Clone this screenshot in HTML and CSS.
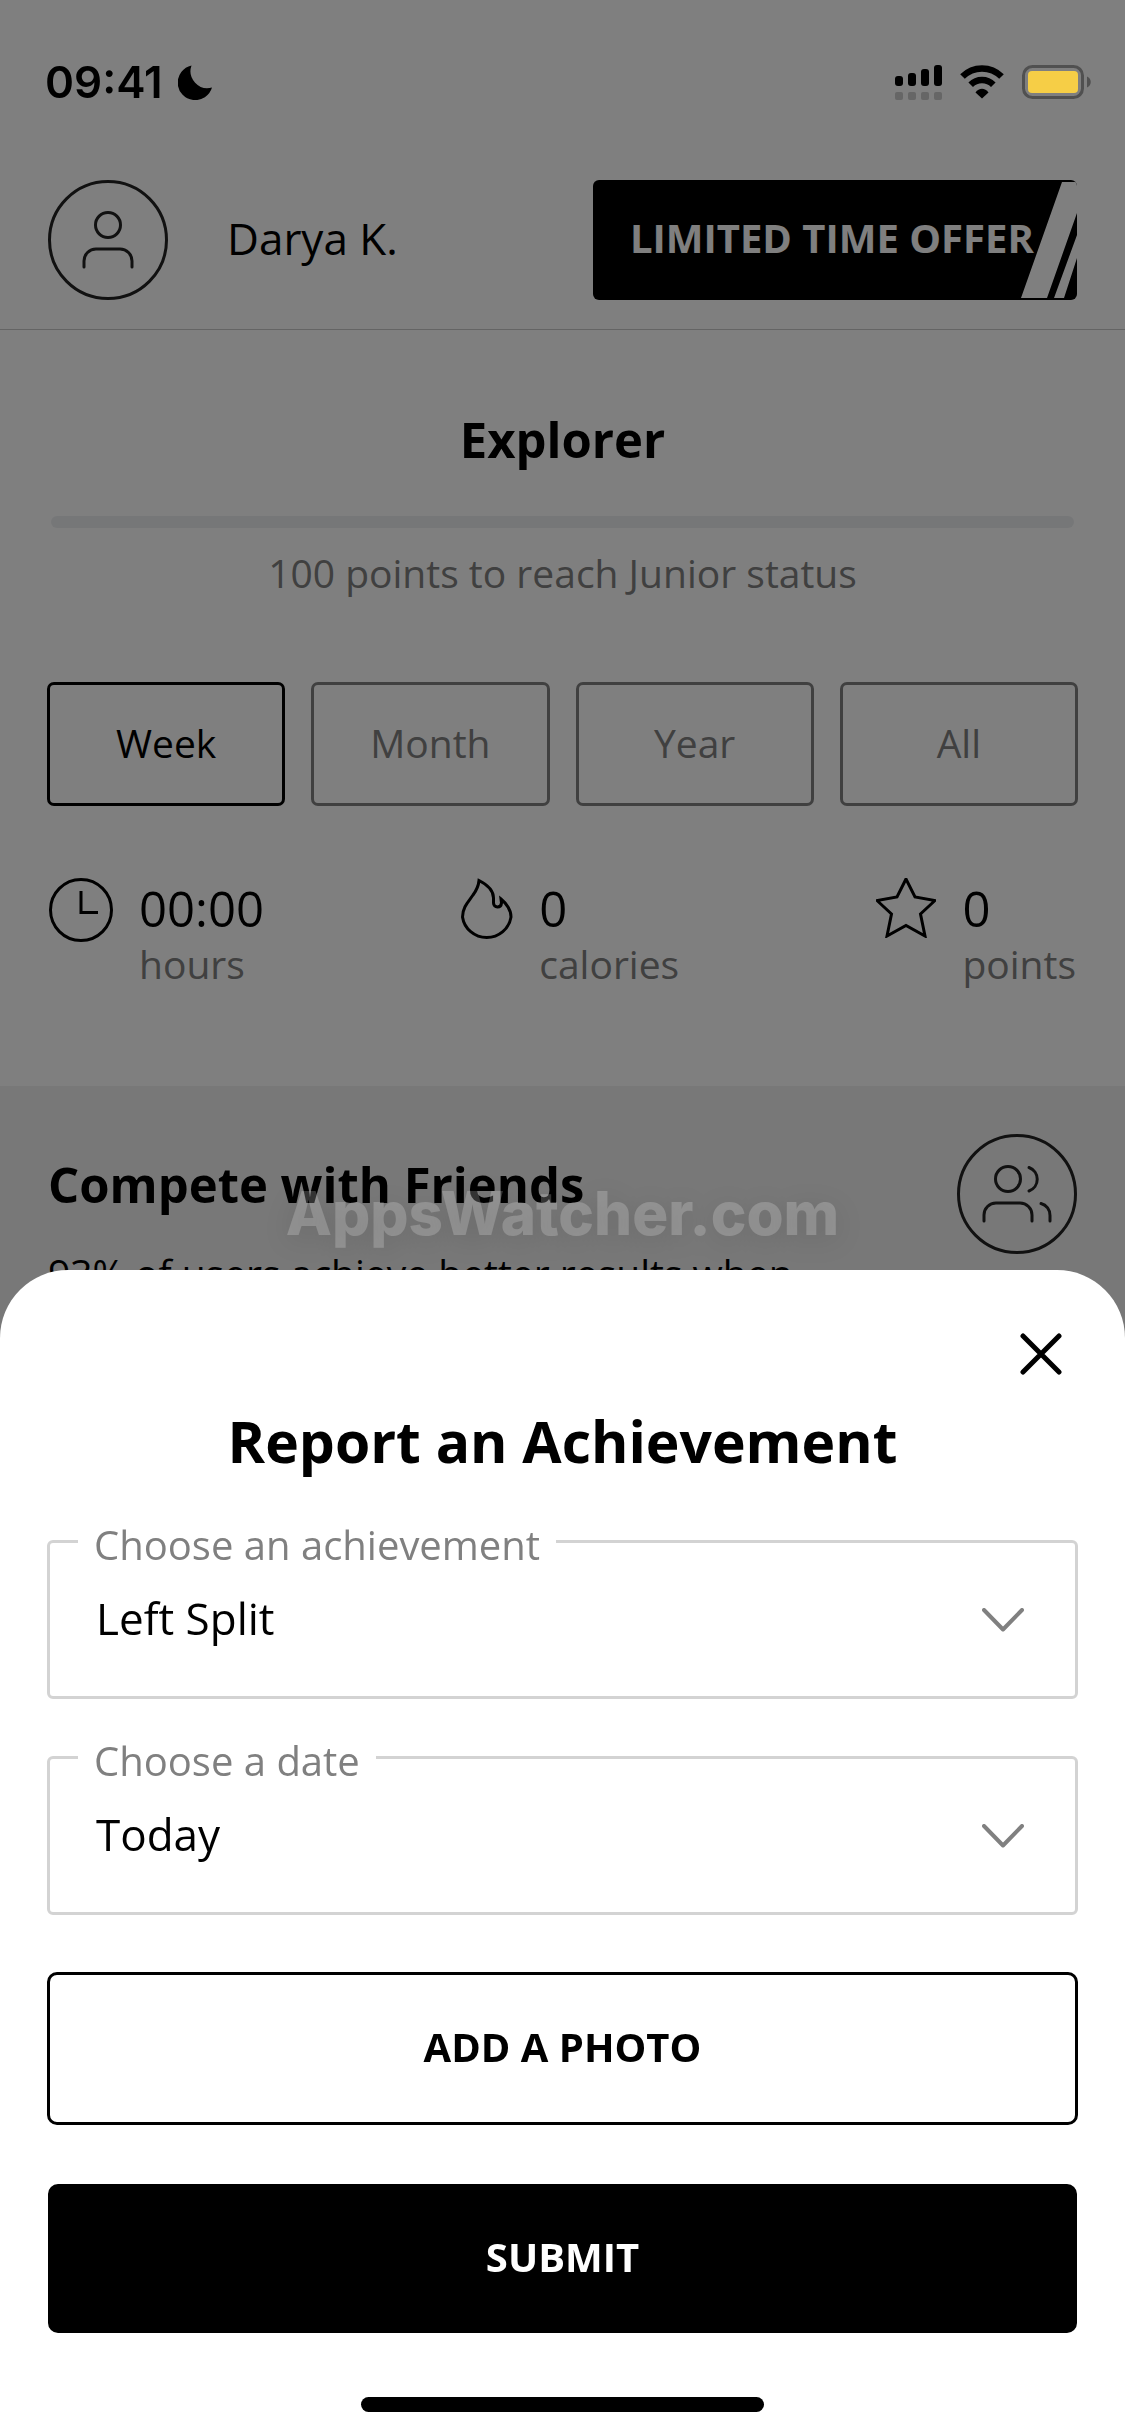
FILE: index.html
```html
<!DOCTYPE html>
<html lang="en">
<head>
  <meta charset="UTF-8">
  <meta name="viewport" content="width=device-width, initial-scale=1">
  <title>Report an Achievement</title>
  <link rel="stylesheet" href="styles.css">
</head>
<body>
  <div class="app">
    <div class="status-bar">
      <div class="status-left">
        <span class="time">09:41</span>
        <svg width="35" height="35" viewBox="0 0 35 35"><path d="M13.5 .5A17.5 17.5 0 1 0 34 22.5A17 17 0 0 1 13.5 .5z"/></svg>
      </div>
      <div class="status-right">
        <svg width="47" height="35" viewBox="0 0 47 35">
          <rect x="0" y="11" width="8" height="10" rx="3"/>
          <rect x="13" y="8" width="8" height="13" rx="3"/>
          <rect x="26" y="4" width="8" height="17" rx="3"/>
          <rect x="39" y="0" width="8" height="21" rx="3"/>
          <g fill="#666">
            <rect x="0" y="27" width="8" height="8" rx="2"/>
            <rect x="13" y="27" width="8" height="8" rx="2"/>
            <rect x="26" y="27" width="8" height="8" rx="2"/>
            <rect x="39" y="27" width="8" height="8" rx="2"/>
          </g>
        </svg>
        <svg width="46" height="34" viewBox="0 0 46 34">
          <path d="M3.5 11.5A27.5 27.5 0 0 1 42.5 11.5" fill="none" stroke="#000" stroke-width="6.5"/>
          <path d="M11.7 19.7A16 16 0 0 1 34.3 19.7" fill="none" stroke="#000" stroke-width="6.5"/>
          <path d="M23 33.5L16.5 27.5C20 22.5 26 22.5 29.5 27.5z"/>
        </svg>
        <svg width="70" height="34" viewBox="0 0 70 34">
          <rect x="1.5" y="1.5" width="59" height="31" rx="9" fill="none" stroke="#505050" stroke-width="3"/>
          <rect x="6" y="6" width="50" height="22" rx="4" fill="#f6ce46"/>
          <path d="M65 11.5c5 2 5 9 0 11z" fill="#505050"/>
        </svg>
      </div>
    </div>

    <header class="header">
      <svg class="avatar" viewBox="0 0 120 120">
        <circle cx="60" cy="60" r="58.5"/>
        <circle cx="60" cy="45" r="12.5"/>
        <path d="M36 87v-6a12 12 0 0 1 12-12h24a12 12 0 0 1 12 12v6"/>
      </svg>
      <span class="user-name">Darya K.</span>
      <button type="button" class="offer">LIMITED TIME OFFER
        <svg class="offer-stripes" width="60" height="116" viewBox="0 0 60 116">
          <path d="M45 0H60V31L30 116H4zM60 53V76L47 116H37z"/>
        </svg>
      </button>
    </header>

    <main class="progress">
      <h2 class="level">Explorer</h2>
      <div class="bar"></div>
      <p class="caption">100 points to reach Junior status</p>

      <div class="tabs">
        <button type="button" class="tab active">Week</button>
        <button type="button" class="tab">Month</button>
        <button type="button" class="tab">Year</button>
        <button type="button" class="tab">All</button>
      </div>

      <div class="stats">
        <div class="stat">
          <svg width="64" height="64" viewBox="0 0 64 64"><circle cx="32" cy="32" r="30.5"/><path d="M32 13v21.5h17"/></svg>
          <div><div class="stat-value">00:00</div><div class="stat-label">hours</div></div>
        </div>
        <div class="stat">
          <svg width="52" height="64" viewBox="0 0 52 64"><path d="M18 2.5C27 7 32.5 13 32.5 20v5c0 5 7.500 5.500 8 0l-.5-4C46 26 50 32 50 39a24.500 24 0 0 1-48.500 0C1.500 29 8 23 12 17c3-4 5.500-9 6-14.500z"/></svg>
          <div><div class="stat-value">0</div><div class="stat-label">calories</div></div>
        </div>
        <div class="stat">
          <svg width="60" height="60" viewBox="0 0 60 60"><path d="M30 1L21 19L1 22.500L15.500 36L11 58L30 47.500L49 58L44.500 36L59 22.500L39 19z"/></svg>
          <div><div class="stat-value">0</div><div class="stat-label">points</div></div>
        </div>
      </div>
    </main>

    <section class="compete">
      <div class="compete-text">
        <h2>Compete with Friends</h2>
        <p>93% of users achieve better results when</p>
      </div>
      <svg class="avatar" viewBox="0 0 120 120">
        <circle cx="60" cy="60" r="58.5"/>
        <circle cx="51" cy="45" r="12.5"/>
        <path d="M27 87v-6a12 12 0 0 1 12-12h24a12 12 0 0 1 12 12v6"/>
        <path d="M72 33.500a12.500 12.500 0 0 1 0 23.500M84 69.500a12 12 0 0 1 9 12v5.500"/>
      </svg>
    </section>
  </div>

  <div class="overlay"></div>

  <div class="modal">
    <div class="watermark">AppsWatcher.com</div>
    <form class="sheet">
      <button type="button" class="close" aria-label="Close">
        <svg width="42" height="42" viewBox="0 0 42 42"><path d="M3 3L39 39M39 3L3 39"/></svg>
      </button>
      <h1>Report an Achievement</h1>

      <div class="field">
        <label for="achievement">Choose an achievement</label>
        <select id="achievement" name="achievement">
          <option>Left Split</option>
        </select>
        <svg class="chevron" width="42" height="24" viewBox="0 0 42 24"><path d="M2 2L21 21.5L40 2"/></svg>
      </div>

      <div class="field">
        <label for="date">Choose a date</label>
        <select id="date" name="date">
          <option>Today</option>
        </select>
        <svg class="chevron" width="42" height="24" viewBox="0 0 42 24"><path d="M2 2L21 21.5L40 2"/></svg>
      </div>

      <button type="button" class="btn">ADD A PHOTO</button>
      <button type="submit" class="btn btn-dark">SUBMIT</button>
      <div class="home-indicator"></div>
    </form>
  </div>
</body>
</html>
```
FILE: styles.css
```css
* { box-sizing: border-box; }
body, h1, h2, p { margin: 0; }
body { font-family: "Open Sans", sans-serif; font-size: 39px; line-height: 56px; color: #000; background: #fff; }
button, select { font: inherit; color: inherit; cursor: pointer; }
svg { display: block; flex: none; }
h2 { font-size: 49px; line-height: 60px; }

.app { display: flex; flex-direction: column; height: 100vh; overflow: hidden; }

/* status bar stays bright above the dimmed page */
.status-bar { position: relative; z-index: 2; display: flex; justify-content: space-between; align-items: center; height: 164px; padding: 0 33px 0 45px; flex: none; }
.status-left { display: flex; align-items: center; gap: 15px; }
.status-right { display: flex; align-items: center; gap: 17px; }
.time { font-family: Inter, sans-serif; font-size: 44px; font-weight: 600; }

.header { display: flex; align-items: center; padding: 16px 48px 29px; border-bottom: 1px solid #c8c8c8; }
.avatar { width: 120px; height: 120px; fill: none; stroke: #222; stroke-width: 3; stroke-linecap: round; }
.user-name { margin-left: 59px; padding-bottom: 4px; font-size: 44px; }
.offer { position: relative; margin-left: auto; width: 484px; height: 120px; padding: 0 0 4px 37px; border: 0; border-radius: 6px; background: #000; color: #fff; font-size: 40px; font-weight: 700; text-align: left; white-space: nowrap; overflow: hidden; }
.offer-stripes { position: absolute; top: 2px; right: 0; fill: #fff; }

.progress { padding: 79px 47px 94px; }
.level { text-align: center; }
.bar { height: 12px; margin: 47px 4px 17px; border-radius: 6px; background: #edeff1; }
.caption { text-align: center; color: #808080; }
.tabs { display: grid; grid-template-columns: repeat(4, 1fr); gap: 26px; margin: 81px 0 74px; }
.tab { height: 124px; padding: 0 0 2px; border: 3px solid #808080; border-radius: 7px; background: none; color: #808080; }
.tab.active { border-color: #000; color: #000; }
.stats { display: flex; justify-content: space-between; padding: 0 2px; }
.stat { display: flex; gap: 26px; }
.stat svg { margin-top: -2px; fill: none; stroke: #000; stroke-width: 3; }
.stat-value { font-size: 49px; }
.stat-label { color: #808080; }

.compete { display: flex; flex: 1; justify-content: space-between; align-items: flex-start; padding: 48px; background: #f1f1f1; }
.compete-text { padding-top: 20px; }
.compete-text p { margin-top: 31px; }

.overlay { position: fixed; inset: 0; z-index: 1; background: rgba(0, 0, 0, .5); }

.modal { position: fixed; left: 0; right: 0; bottom: 0; z-index: 3; }
.watermark { height: 92px; text-align: center; font: 800 60px/70px Inter, sans-serif; color: rgba(255, 255, 255, .2); text-shadow: 0 6px 30px rgba(0, 0, 0, .12); }

.sheet { position: relative; display: flex; flex-direction: column; gap: 57px; padding: 47px 47px 24px; border-radius: 68px 68px 0 0; background: #fff; }
.close { display: grid; place-items: center; align-self: flex-end; width: 74px; height: 74px; padding: 0; border: 0; background: none; }
.close path { stroke: #000; stroke-width: 5; stroke-linecap: round; }
.sheet h1 { margin: -43px 0 6px; font-size: 57px; line-height: 72px; text-align: center; }

.field { position: relative; display: grid; height: 159px; }
.field label { position: absolute; top: -15px; left: 31px; padding: 0 16px; font-size: 40px; line-height: 40px; background: #fff; color: #808080; }
.field select { grid-area: 1 / 1; appearance: none; width: 100%; padding: 0 100px 4px 46px; border: 3px solid #d3d3d3; border-radius: 6px; background: none; font-size: 44px; }
.chevron { grid-area: 1 / 1; place-self: center end; margin-right: 54px; pointer-events: none; fill: none; stroke: #808080; stroke-width: 4; stroke-linecap: round; stroke-linejoin: round; }

.btn { height: 153px; padding: 0 0 4px; border: 3px solid #000; border-radius: 10px; background: #fff; font-size: 40px; font-weight: 700; }
.btn-dark { height: 149px; margin: 2px 1px; background: #000; color: #fff; }
.home-indicator { align-self: center; width: 403px; height: 15px; margin-top: 5px; border-radius: 8px; background: #000; }
```
